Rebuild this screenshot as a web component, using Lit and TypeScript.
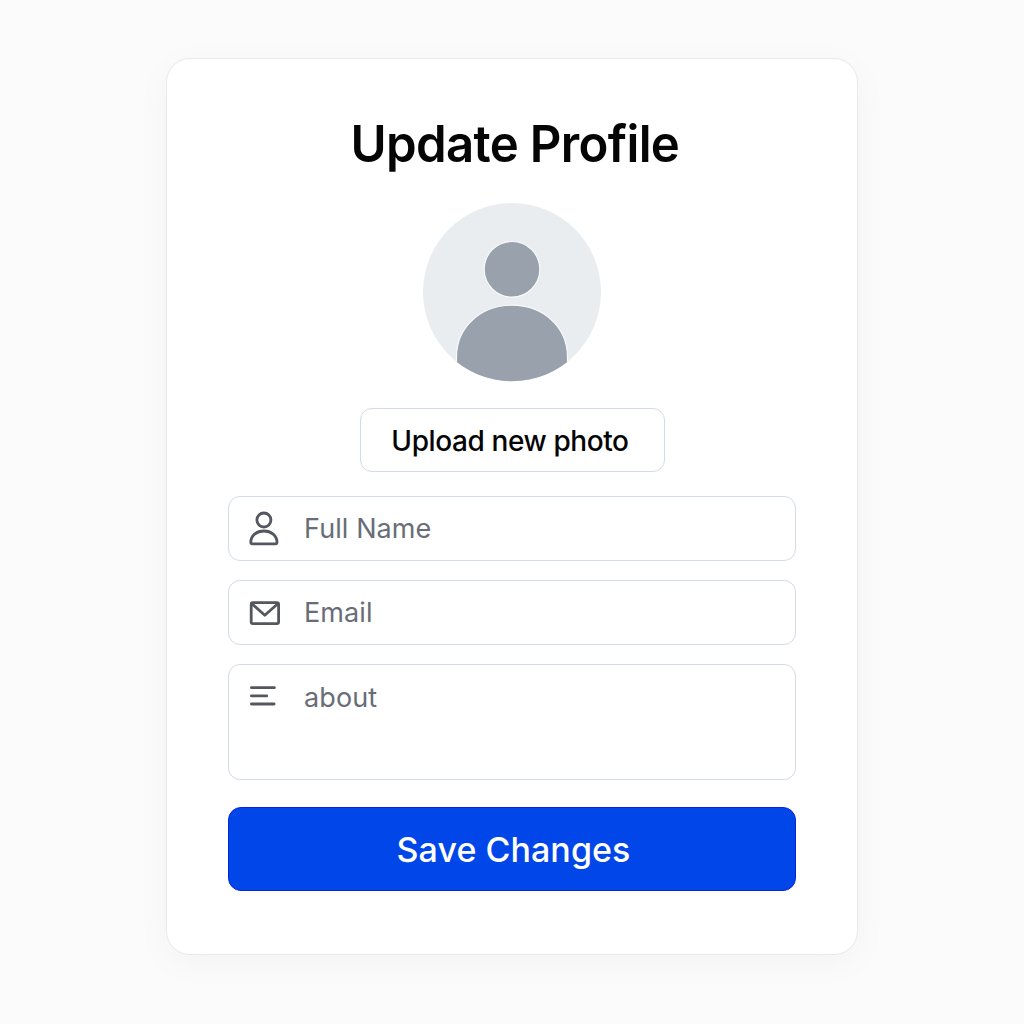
import { LitElement, html, css, svg } from "lit";
import { customElement, property } from "lit/decorators.js";

const icons = {
  user: svg`<circle cx="15.9" cy="9" r="7"/><path d="M2.8 31.3C2.8 24.4 8.6 20 15.9 20S29 24.4 29 31.3Q29 32.8 27.5 32.8H4.3Q2.8 32.8 2.8 31.3Z"/>`,
  mail: svg`<rect x="3.2" y="7.6" width="27.4" height="21" rx="1.6"/><path d="M4.4 9.2L16.8 20.2L29.2 9.2"/>`,
  lines: svg`<path d="M3.4 7.7H26.4M3.4 15.9H18.7M3.4 24H26.1"/>`,
};

@customElement("profile-field")
class ProfileField extends LitElement {
  @property() icon: keyof typeof icons = "user";
  @property() label = "";

  static styles = css`
    :host {
      display: flex;
      box-sizing: border-box;
      height: 65px;
      padding: 14px 19px 0;
      border: 1px solid #d3dbe4;
      border-radius: 12px;
      background: #fff;
    }
    :host([tall]) {
      height: 116px;
      padding-top: 15px;
    }
    .icon {
      flex: none;
      width: 36px;
      height: 36px;
      fill: none;
      stroke: #55575e;
      stroke-width: 2.8;
      stroke-linecap: round;
      stroke-linejoin: round;
    }
    .label {
      margin-left: 20px;
      font-size: 27px;
      line-height: 36px;
      letter-spacing: 0.1px;
      color: #686d77;
      white-space: nowrap;
    }
  `;

  render() {
    return html`
      <svg class="icon" viewBox="0 0 36 36" aria-hidden="true">${icons[this.icon]}</svg>
      <span class="label">${this.label}</span>
    `;
  }
}

@customElement("app-root")
class AppRoot extends LitElement {
  static styles = css`
    :host {
      display: flex;
      flex-direction: column;
      align-items: center;
      box-sizing: border-box;
      height: 1024px;
      padding-top: 58px;
      background: #fbfbfb;
      font-family: Inter, "Liberation Sans", sans-serif;
    }
    .card {
      display: flex;
      flex-direction: column;
      align-items: center;
      box-sizing: border-box;
      width: 692px;
      height: 897px;
      padding: 54px 61px 0;
      border: 1px solid #e9eaeb;
      border-radius: 24px;
      background: #fff;
      box-shadow: 0 8px 36px rgba(0, 0, 0, 0.035);
    }
    .title {
      margin: 0 0 0 6px;
      height: 62px;
      font-size: 50.5px;
      line-height: 61px;
      font-weight: 600;
      letter-spacing: -0.7px;
      transform: scaleX(0.973);
      color: #050505;
      white-space: nowrap;
    }
    .avatar {
      width: 180px;
      height: 180px;
      margin-top: 27px;
    }
    .upload, .save {
      box-sizing: border-box;
      font-family: inherit;
      font-weight: 500;
      white-space: nowrap;
    }
    .upload {
      width: 305px;
      height: 64px;
      margin-top: 26px;
      padding: 2px 4px 0 0;
      border: 1px solid #d3dbe4;
      border-radius: 12px;
      background: #fff;
      color: #050505;
      font-size: 28px;
      font-weight: 450;
      letter-spacing: -0.4px;
    }
    .fields {
      display: flex;
      flex-direction: column;
      align-self: stretch;
      gap: 19px;
      margin-top: 24px;
    }
    .save {
      align-self: stretch;
      height: 84px;
      margin-top: 27px;
      padding: 0 0 0 3px;
      border: 1px solid #0822dd;
      border-radius: 13px;
      background: #0046e8;
      color: #fff;
      font-size: 34px;
      letter-spacing: 0.05px;
    }
  `;

  render() {
    return html`
      <main class="card">
        <h1 class="title">Update Profile</h1>
        <svg class="avatar" viewBox="0 0 180 180" aria-hidden="true">
          <clipPath id="disc"><circle cx="90" cy="90.3" r="89" /></clipPath>
          <circle cx="90" cy="90" r="89" fill="#e9edef" />
          <g clip-path="url(#disc)" fill="#99a1ac" stroke="#f7f9fa" stroke-width="1.2">
            <circle cx="90" cy="67.3" r="27.8" />
            <path d="M34.5 182V155C34.5 124 60 103.2 90 103.2S145.5 124 145.5 155V182Z" />
          </g>
        </svg>
        <button class="upload">Upload new photo</button>
        <div class="fields">
          <profile-field icon="user" label="Full Name"></profile-field>
          <profile-field icon="mail" label="Email"></profile-field>
          <profile-field icon="lines" label="about" tall></profile-field>
        </div>
        <button class="save">Save Changes</button>
      </main>
    `;
  }
}
